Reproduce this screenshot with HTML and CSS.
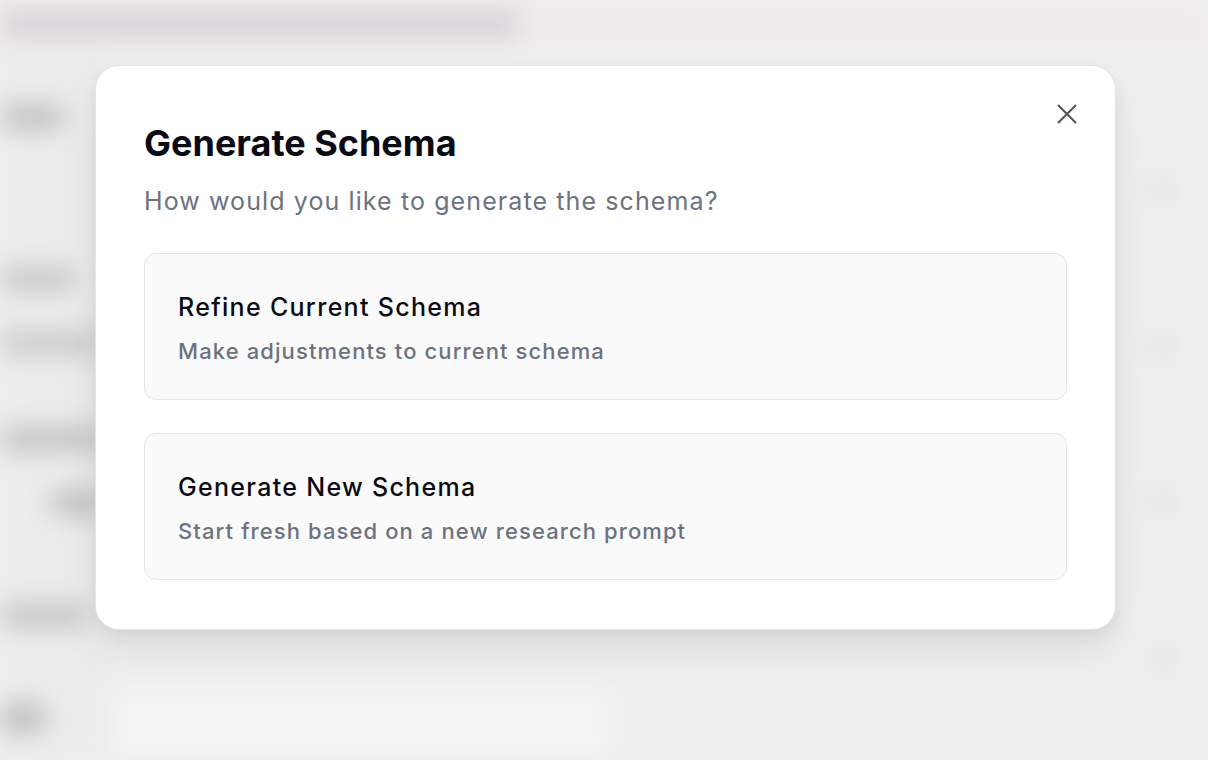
FILE: index.html
```html
<!DOCTYPE html>
<html lang="en">
<head>
<meta charset="utf-8">
<title>Generate Schema</title>
<link rel="stylesheet" href="styles.css">
</head>
<body>
<div class="backdrop">
  <div class="bg-header">
    <div class="bg-crumb"></div>
  </div>
  <div class="bg-main">
    <div class="bg-side">
      <div class="blob b1"></div>
      <div class="blob b2"></div>
      <div class="blob b3"></div>
      <div class="blob b4"></div>
      <div class="blob b5"></div>
      <div class="blob b6"></div>
      <div class="blob b7"></div>
    </div>
    <div class="bg-content">
      <div class="bg-input"></div>
    </div>
    <div class="bg-rail">
      <div class="dot"></div>
      <div class="dot"></div>
      <div class="dot"></div>
      <div class="dot"></div>
    </div>
  </div>
</div>

<div class="overlay">
  <div class="modal" role="dialog" aria-labelledby="dlg-title">
    <button class="close" aria-label="Close">
      <svg viewBox="0 0 20 20" width="20" height="20" fill="none" stroke="currentColor" stroke-width="2" stroke-linecap="round">
        <path d="M1.5 1.5 18.5 18.5M18.5 1.5 1.5 18.5"/>
      </svg>
    </button>
    <h2 id="dlg-title" class="title">Generate Schema</h2>
    <p class="subtitle">How would you like to generate the schema?</p>
    <div class="options">
      <button class="option">
        <span class="opt-title">Refine Current Schema</span>
        <span class="opt-desc">Make adjustments to current schema</span>
      </button>
      <button class="option">
        <span class="opt-title">Generate New Schema</span>
        <span class="opt-desc">Start fresh based on a new research prompt</span>
      </button>
    </div>
  </div>
</div>
</body>
</html>
```

FILE: styles.css
```css
* { box-sizing: border-box; }
html, body { margin: 0; padding: 0; }
body {
  width: 1208px;
  height: 760px;
  overflow: hidden;
  background: #eeeeee;
  font-family: Inter, "Noto Sans", "Liberation Sans", sans-serif;
  position: relative;
}

/* blurred app behind the dialog */
.backdrop {
  height: 100%;
  display: flex;
  flex-direction: column;
  filter: blur(12px);
}
.bg-header {
  height: 52px;
  background: #efebed;
  padding: 12px 0 0 0;
}
.bg-crumb {
  width: 520px;
  height: 24px;
  background: #d4cfd3;
  border-radius: 12px;
}
.bg-main {
  flex: 1;
  display: flex;
}
.bg-side {
  width: 110px;
  display: flex;
  flex-direction: column;
  padding-top: 52px;
  background: #ececec;
}
.blob { height: 26px; border-radius: 13px; background: #c6c6c6; }
.b1 { width: 66px; background: #c3c3c3; }
.b2 { width: 76px; margin-top: 136px; background: #cacaca; }
.b3 { width: 104px; margin-top: 38px; background: #cdcdcd; }
.b4 { width: 104px; margin-top: 70px; background: #c6c6c6; }
.b5 { width: 54px; margin-top: 38px; margin-left: 50px; background: #c1c1c1; }
.b6 { width: 88px; margin-top: 86px; background: #c8c8c8; }
.b7 { width: 46px; margin-top: 74px; height: 32px; background: #c1c1c1; }
.bg-content {
  flex: 1;
  display: flex;
  flex-direction: column;
  justify-content: flex-end;
  background: #efefef;
}
.bg-input {
  width: 500px;
  height: 70px;
  background: #f3f3f3;
  border-radius: 10px;
}
.bg-rail {
  width: 90px;
  display: flex;
  flex-direction: column;
  align-items: center;
  padding-top: 120px;
  gap: 120px;
  background: #efefef;
}
.dot { width: 36px; height: 36px; border-radius: 50%; background: #e8e8e8; }

/* dialog */
.overlay {
  position: absolute;
  inset: 0;
  display: flex;
  justify-content: center;
  align-items: flex-start;
  padding-top: 65px;
  padding-left: 3px;
}
.modal {
  position: relative;
  width: 1021px;
  background: #ffffff;
  border: 1px solid #e4e4e9;
  border-radius: 24px;
  padding: 48px 48px 49px;
  box-shadow: 0 20px 40px rgba(0, 0, 0, 0.08), 0 6px 14px rgba(0, 0, 0, 0.05);
}
.close {
  position: absolute;
  top: 38px;
  right: 38px;
  width: 20px;
  height: 20px;
  padding: 0;
  border: 0;
  background: none;
  color: #52525b;
  display: flex;
}
.title {
  margin: 2px 0 0 0;
  font-size: 36px;
  line-height: 54px;
  font-weight: 700;
  letter-spacing: 0;
  color: #0a0a14;
}
.subtitle {
  margin: 13px 0 0 0;
  font-size: 25px;
  line-height: 36px;
  font-weight: 400;
  letter-spacing: 1.1px;
  color: #6b7280;
}
.options {
  margin-top: 34px;
  display: flex;
  flex-direction: column;
  gap: 33px;
}
.option {
  display: flex;
  flex-direction: column;
  align-items: flex-start;
  text-align: left;
  width: 100%;
  padding: 35px 33px 33px;
  background: #fafafa;
  border: 1px solid #e4e4e9;
  border-radius: 12px;
  font-family: inherit;
}
.opt-title {
  font-size: 25px;
  line-height: 36px;
  font-weight: 500;
  letter-spacing: 1.3px;
  color: #0a0a14;
}
.opt-desc {
  margin-top: 11px;
  font-size: 22px;
  line-height: 30px;
  font-weight: 500;
  letter-spacing: 1.1px;
  color: #6b7280;
}
```
